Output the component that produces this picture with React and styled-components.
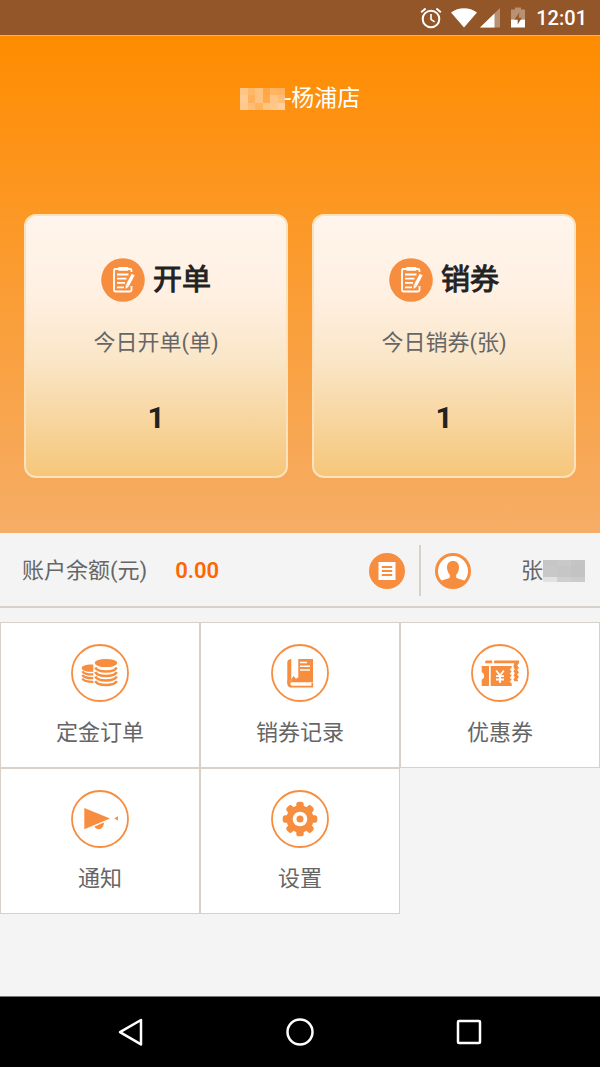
import React from 'react';
import styled, { createGlobalStyle, css } from 'styled-components';

const ORANGE = '#f68d3f';
const LINE = '#d8d1c8';

const TITLE_BLOCKS = [
    ['#ffc586', '#ffb866', '#ffc27e', '#ffa744', '#ffb561', '#ffb35c'],
    ['#ffcb93', '#ffb05a', '#ffc27e', '#ffaa4c', '#ffc486', '#ffbe78'],
    ['#ffc88c', '#ffbe78', '#ffb35c', '#ffc382', '#ffc789', '#ffd09d'],
];

const NAME_BLOCKS = [
    ['#c6c6c6', '#c9c9c9', '#c4c4c4'],
    ['#c8c8c8', '#c6c6c6', '#c3c3c3'],
    ['#c8c8c8', '#c6c6c6', '#c3c3c3'],
    ['#e2e2e2', '#cfcfcf', '#cbcbcb'],
];

const Mosaic = ({ blocks, width, height }) => {
    const w = width / blocks[0].length;
    const h = height / blocks.length;

    return (
        <svg width={width} height={height} shapeRendering="crispEdges" aria-hidden="true">
            {blocks.map((row, y) =>
                row.map((fill, x) => (
                    <rect key={`${x}-${y}`} x={x * w} y={y * h} width={w + 1} height={h + 1} fill={fill} />
                ))
            )}
        </svg>
    );
};

const AlarmIcon = () => (
    <svg width="22" height="22" viewBox="0 0 22 22" fill="none" stroke="#fff" strokeWidth="2">
        <circle cx="11" cy="12" r="8.3" />
        <path d="M11 7v5.4l3.6 2.4" strokeWidth="1.6" />
        <path d="M1.2 5.2 5.6 1.6M20.8 5.2 16.4 1.6" />
    </svg>
);

const WifiIcon = () => (
    <svg width="26" height="22" viewBox="0 0 26 22" fill="#fff">
        <path d="M0 5.5C7.4-.2 18.6-.2 26 5.5L13 20.5Z" />
    </svg>
);

const SignalIcon = () => (
    <svg width="20" height="22" viewBox="0 0 20 22" fill="#fff">
        <path d="M20 1v19.5H0Z" opacity="0.35" />
        <path d="M14.5 6.5v14H0Z" />
    </svg>
);

const BatteryIcon = () => (
    <svg width="14" height="22" viewBox="0 0 14 22" fill="#fff">
        <path d="M4 .5h6v2h4v10H0v-10h4Z" opacity="0.35" />
        <path d="M0 12.5h14v8H0Z" />
        <path d="M8.5 5.5l-5 7h3.2v5l4.1-6.800H7.500Z" fill="#935629" />
    </svg>
);

const ClipboardIcon = () => (
    <svg width="44" height="44" viewBox="0 0 44 44" fill="none" stroke="#fff">
        <circle cx="22" cy="22" r="21.8" fill={ORANGE} stroke="none" />
        <path d="M30.5 14v-1.5q0-1.5-1.5-1.5H14.5Q13 11 13 12.5V32q0 1.5 1.5 1.5H29q1.5 0 1.5-1.5v-4" strokeWidth="1.8" />
        <rect x="17" y="9" width="10.5" height="3.8" rx="1" fill="#fff" stroke="none" />
        <path d="M16 16.5h11.5M16 20.7h9.5M16 24.9h8M16 29.3h7" strokeWidth="1.8" />
        <path d="m32.2 16.5-5.7 10.7" strokeWidth="3.4" />
        <path d="m24.8 26.4 3.3 1.8-3.5 2.7Z" fill="#fff" stroke="none" />
    </svg>
);

const ListIcon = () => (
    <svg width="36" height="36" viewBox="0 0 36 36">
        <circle cx="18" cy="18" r="18" fill={ORANGE} />
        <path d="M9.5 9h17v18h-17Z" fill="#fff" />
        <path d="M12.8 14h10.4M12.8 18h10.4M12.8 22h10.4" stroke={ORANGE} strokeWidth="1.9" />
    </svg>
);

const AvatarIcon = () => (
    <svg width="36" height="36" viewBox="0 0 36 36">
        <circle cx="18" cy="18" r="18" fill={ORANGE} />
        <circle cx="18" cy="18" r="15" fill="#fff" />
        <path
            d="M18 8c3.8 0 6 2.6 6 6.2 0 1.4-.2 2-.5 3-.4 2.3-1.3 3.6-2.3 4.6v2.6c1.5 1.4 5.3 1.7 9.6 3.8C27.8 32 23.5 34 18 34S8.2 32 5.2 28.2c4.3-2.1 8.1-2.4 9.6-3.8v-2.6c-1-1-1.9-2.3-2.3-4.6-.3-1-.5-1.6-.5-3C12 10.6 14.2 8 18 8Z"
            fill={ORANGE}
        />
    </svg>
);

const Ring = ({ children }) => (
    <svg width="58" height="58" viewBox="0 0 58 58" fill={ORANGE} aria-hidden="true">
        <circle cx="29" cy="29" r="28" fill="none" stroke={ORANGE} strokeWidth="1.8" />
        {children}
    </svg>
);

const CoinsIcon = () => (
    <Ring>
        <ellipse cx="35" cy="19" rx="11.3" ry="4.1" />
        <path d="M22.3 20.6v7.2c-6 .3-11.6-1-11.6-3.6s5.6-4 11.6-3.6Z" />
        <g fill="none" stroke={ORANGE} strokeWidth="2.7">
            <path d="M24.3 23.5C27 28.8 43 28.8 45.7 23.5" />
            <path d="M24.3 28C27 33.3 43 33.3 45.7 28" />
            <path d="M24.3 32.5C27 37.8 43 37.8 45.7 32.5" />
            <path d="M24.3 37C27 42.3 43 42.3 45.7 37" />
            <path d="M11.3 27.3c1.5 2.2 6 3.2 11 3.1" strokeWidth="2.3" />
            <path d="M11.3 31c1.5 2.2 6 3.2 11 3.1" strokeWidth="2.3" />
            <path d="M11.3 34.7c1.5 2.2 6 3.2 11 3.1" strokeWidth="2.3" />
        </g>
    </Ring>
);

const BookIcon = () => (
    <Ring>
        <path d="M20.3 15v21.5c-1.6.3-2.3 1.4-2.3 2.7h-1.700V18.500c0-2.100 1.500-3.500 4-3.500Z" />
        <path d="M27.3 15H42v22H20.3v-1.8l2.3-3.2 2.4 2.8 2.3-1.5Z" />
        <path d="M42 37.5H20.5c-2.8 0-2.8 5.2 0 5.2h20.8v-4" fill="none" stroke={ORANGE} strokeWidth="1.7" />
        <path d="M16.3 36v3.5c0 2.4 1.5 4 4 4v-2l-2-2Z" />
        <path d="M29 18.5h7M29 22.3h10M29 26h10" stroke="#fff" strokeWidth="1.5" />
    </Ring>
);

const CouponIcon = () => (
    <Ring>
        <path d="M15.5 16.5h5.7v2.7h-7v-1.4q0-1.3 1.3-1.3ZM24.5 16.5H48v2.7H23v-1.4q0-1.3 1.5-1.3Z" />
        <path d="M10.7 22H18v20h-7.3v-6.3q2.5-.7 2.5-3.7t-2.5-3.7Z" />
        <path d="M19.7 22h21v1.5l-2 2 2 2-2 2 2 2-2 2 2 2-2 2 2 2V42h-21Z" />
        <path d="M43.2 19H48l-1.8 2.4 1.8 2.3-1.8 2.3 1.8 2.3-1.8 2.3 1.8 2.3-1.8 2.3 1 2h-3.8l-1-2 1.5-2-1.5-2 1.5-2-1.5-2 1.5-2-1.5-2Z" />
        <path d="m25.2 26.5 3.8 5 3.8-5M29 31v8M25 32.2h8M25 35.5h8" fill="none" stroke="#fff" strokeWidth="1.8" />
    </Ring>
);

const HornIcon = () => (
    <Ring>
        <path d="M13.3 18 39 28.4 13.3 39.3Z" />
        <path d="M23.5 36.5l9.3-3.900c.3 3.500-1.800 6.500-4.800 6.700-2 .1-3.600-1-4.500-2.800Z" />
        <path d="M43.3 28.4 47 26.2v4.4Z" />
    </Ring>
);

const GearIcon = () => (
    <Ring>
        {[0, 45, 90, 135].map(angle => (
            <rect key={angle} x="25.3" y="11.7" width="7.4" height="34.6" rx="2.6" transform={`rotate(${angle} 29 29)`} />
        ))}
        <circle cx="29" cy="29" r="13.6" />
        <circle cx="29" cy="29" r="7.3" fill="#fff" />
        <circle cx="29" cy="29" r="3.5" />
    </Ring>
);

const cards = [
    { title: '开单', label: '今日开单(单)', value: 1 },
    { title: '销券', label: '今日销券(张)', value: 1 },
];

const menu = [
    { label: '定金订单', Icon: CoinsIcon },
    { label: '销券记录', Icon: BookIcon },
    { label: '优惠券', Icon: CouponIcon },
    { label: '通知', Icon: HornIcon },
    { label: '设置', Icon: GearIcon },
];

const App = () => (
    <Screen>
        <GlobalStyle />
        <StatusBar>
            <AlarmIcon />
            <WifiIcon />
            <SignalIcon />
            <BatteryIcon />
            <Time>12:01</Time>
        </StatusBar>
        <Hero>
            <Title>
                <Mosaic blocks={TITLE_BLOCKS} width={45} height={22} />
                -杨浦店
            </Title>
            <Cards>
                {cards.map(({ title, label, value }) => (
                    <Card key={title} type="button">
                        <CardTitle>
                            <ClipboardIcon />
                            {title}
                        </CardTitle>
                        <CardLabel>{label}</CardLabel>
                        <CardValue>{value}</CardValue>
                    </Card>
                ))}
            </Cards>
        </Hero>
        <Account>
            <span>账户余额(元)</span>
            <Balance>0.00</Balance>
            <IconButton type="button" aria-label="账单">
                <ListIcon />
            </IconButton>
            <Divider />
            <IconButton type="button" aria-label="账户">
                <AvatarIcon />
            </IconButton>
            <UserName>
                张
                <Mosaic blocks={NAME_BLOCKS} width={42} height={22} />
            </UserName>
        </Account>
        <Menu>
            {menu.map(({ label, Icon }) => (
                <MenuItem key={label} type="button">
                    <Icon />
                    <MenuLabel>{label}</MenuLabel>
                </MenuItem>
            ))}
        </Menu>
        <NavBar>
            <NavButton type="button" aria-label="返回">
                <svg width="28" height="28" viewBox="0 0 28 28">
                    <path d="M3 14.2 24 2v24.4Z" />
                </svg>
            </NavButton>
            <NavButton type="button" aria-label="主屏幕">
                <svg width="28" height="28" viewBox="0 0 28 28">
                    <circle cx="14" cy="14" r="12.5" />
                </svg>
            </NavButton>
            <NavButton type="button" aria-label="最近任务">
                <svg width="28" height="28" viewBox="0 0 28 28">
                    <rect x="3" y="3" width="22" height="22" rx="1" />
                </svg>
            </NavButton>
        </NavBar>
    </Screen>
);

const GlobalStyle = createGlobalStyle`
    *, *::before, *::after {
        box-sizing: border-box;
    }

    body {
        margin: 0;
        background: #f4f4f4;
    }

    svg {
        display: block;
        flex-shrink: 0;
    }
`;

const resetButton = css`
    margin: 0;
    padding: 0;
    border: 0;
    background: none;
    color: inherit;
    font: inherit;
    cursor: pointer;
`;

const Screen = styled.main`
    display: flex;
    flex-direction: column;
    min-height: 100vh;
    background: #f4f4f4;
    color: #666;
    font-family: Roboto, 'Noto Sans CJK SC', sans-serif;
    font-size: 22px;
    line-height: 30px;
`;

const StatusBar = styled.header`
    display: flex;
    align-items: center;
    justify-content: flex-end;
    height: 35px;
    padding-right: 13px;
    background: #935629;

    svg {
        margin-right: 11px;
    }

    svg:nth-child(1) {
        margin-right: 9px;
    }

    svg:nth-child(2) {
        margin-right: 3px;
    }
`;

const Time = styled.time`
    color: #fff;
    font-size: 20px;
    font-weight: 500;
`;

const Hero = styled.section`
    padding: 45px 24px 55px;
    border-top: 1px solid #f7b25f;
    background: linear-gradient(#ff8c00, #f6ad66);
`;

const Title = styled.h1`
    display: flex;
    align-items: center;
    justify-content: center;
    margin: 0 0 97px;
    color: #fff;
    font-size: 23px;
    font-weight: 400;
    line-height: 36px;
`;

const Cards = styled.div`
    display: grid;
    grid-template-columns: 1fr 1fr;
    gap: 24px;
`;

const Card = styled.button`
    ${resetButton};
    display: flex;
    flex-direction: column;
    align-items: center;
    padding: 42px 0 40px;
    border: 2px solid #fbe2bd;
    border-radius: 12px;
    background: linear-gradient(#fff5ec, #fff0e2 30%, #fae6c8 55%, #f5c678) border-box;
`;

const CardTitle = styled.span`
    display: flex;
    align-items: center;
    gap: 8px;
    color: #222;
    font-size: 29px;
    line-height: 44px;
    -webkit-text-stroke: 1px #222;
`;

const CardLabel = styled.span`
    margin-top: 26px;
`;

const CardValue = styled.span`
    margin-top: 42px;
    color: #222;
    font-size: 30px;
    font-weight: 700;
    line-height: 36px;
`;

const Account = styled.section`
    display: flex;
    align-items: center;
    padding: 12px 15px 10px 22px;
    border-bottom: 2px solid ${LINE};
`;

const Balance = styled.strong`
    margin: 0 auto 0 28px;
    color: #ff6600;
    font-weight: 600;
`;

const IconButton = styled.button`
    ${resetButton};
`;

const Divider = styled.span`
    width: 2px;
    height: 51px;
    margin: 0 14px;
    background: ${LINE};
`;

const UserName = styled.span`
    display: flex;
    align-items: center;
    margin-left: 50px;
`;

const Menu = styled.nav`
    display: grid;
    grid-template-columns: repeat(3, 1fr);
    margin: 14px 0;
`;

const MenuItem = styled.button`
    ${resetButton};
    display: flex;
    flex-direction: column;
    align-items: center;
    padding: 21px 0 19px;
    border: 1px solid ${LINE};
    background: #fff;
`;

const MenuLabel = styled.span`
    margin-top: 16px;
`;

const NavBar = styled.footer`
    display: flex;
    margin-top: auto;
    padding: 0 47px;
    border-top: 1px solid #777;
    background: #000;
`;

const NavButton = styled.button`
    ${resetButton};
    display: flex;
    flex: 1;
    justify-content: center;
    padding: 21px 0;

    svg {
        fill: none;
        stroke: #fff;
        stroke-width: 2.5px;
        stroke-linejoin: round;
    }
`;

export default App;
